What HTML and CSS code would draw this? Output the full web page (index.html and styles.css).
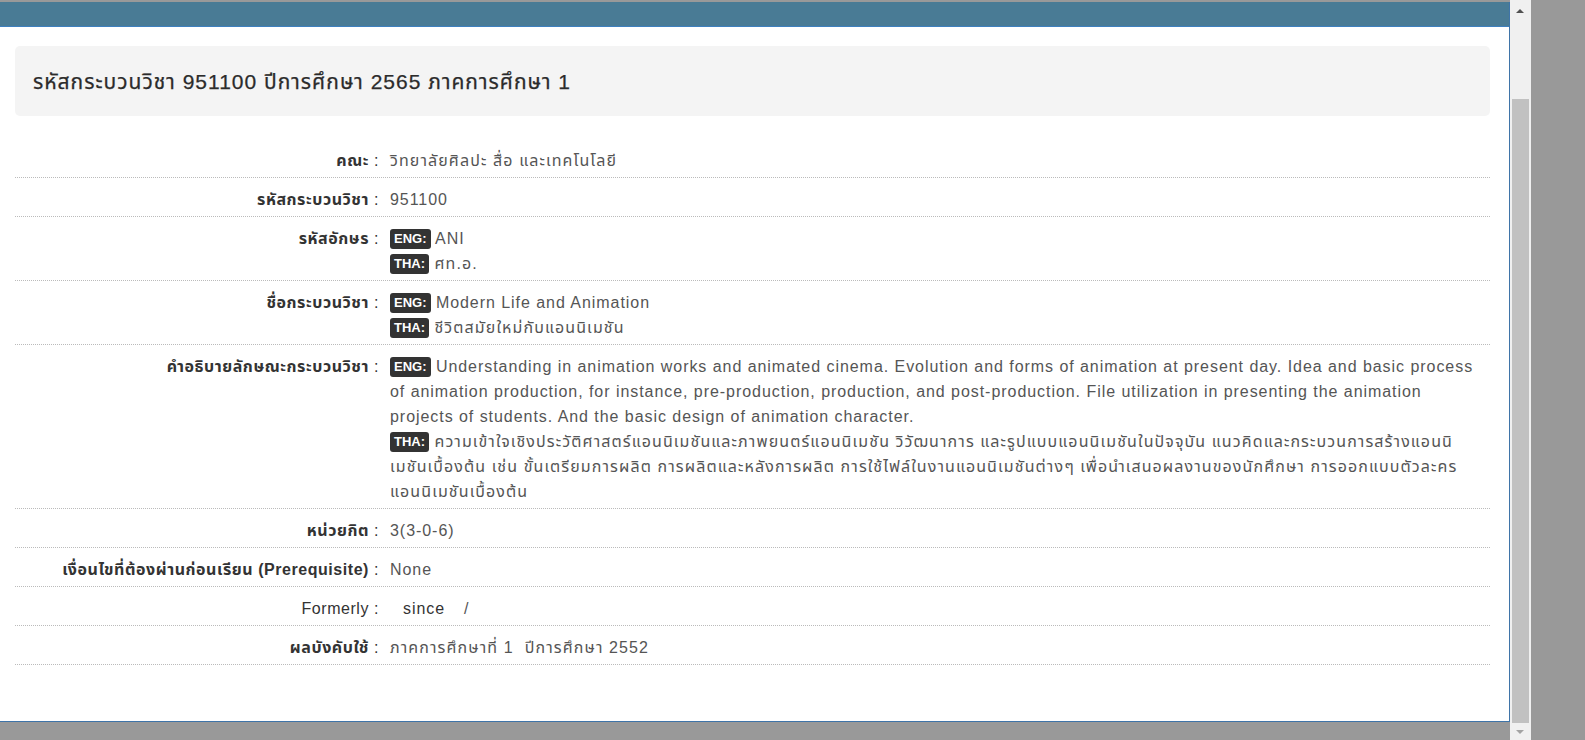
FILE: index.html
```html
<!DOCTYPE html>
<html lang="th">
<head>
<meta charset="utf-8">
<title>รหัสกระบวนวิชา 951100</title>
<link rel="stylesheet" href="styles.css">
</head>
<body>
<div class="stage">
  <div class="viewport">
    <div class="top-strip"></div>
    <div class="modal">
      <div class="modal-bar"></div>
      <div class="modal-body">
        <div class="title-box">
          <h1 class="title">รหัสกระบวนวิชา 951100 ปีการศึกษา 2565 ภาคการศึกษา 1</h1>
        </div>
        <div class="details">
          <div class="row">
            <div class="label"><b>คณะ</b> :</div>
            <div class="value"><span class="th">วิทยาลัยศิลปะ สื่อ และเทคโนโลยี</span></div>
          </div>
          <div class="row">
            <div class="label"><b>รหัสกระบวนวิชา</b> :</div>
            <div class="value">951100</div>
          </div>
          <div class="row">
            <div class="label"><b>รหัสอักษร</b> :</div>
            <div class="value">
              <div><span class="badge">ENG:</span> ANI</div>
              <div><span class="badge">THA:</span> <span class="th">ศท.อ.</span></div>
            </div>
          </div>
          <div class="row">
            <div class="label"><b>ชื่อกระบวนวิชา</b> :</div>
            <div class="value">
              <div><span class="badge">ENG:</span> Modern Life and Animation</div>
              <div><span class="badge">THA:</span> <span class="th">ชีวิตสมัยใหม่กับแอนนิเมชัน</span></div>
            </div>
          </div>
          <div class="row">
            <div class="label"><b>คำอธิบายลักษณะกระบวนวิชา</b> :</div>
            <div class="value">
              <div><span class="badge">ENG:</span> Understanding in animation works and animated cinema. Evolution and forms of animation at present day. Idea and basic process of animation production, for instance, pre-production, production, and post-production. File utilization in presenting the animation projects of students. And the basic design of animation character.</div>
              <div><span class="badge">THA:</span> <span class="th">ความเข้าใจเชิงประวัติศาสตร์แอนนิเมชันและภาพยนตร์แอนนิเมชัน วิวัฒนาการ และรูปแบบแอนนิเมชันในปัจจุบัน แนวคิดและกระบวนการสร้างแอนนิ<br>เมชันเบื้องต้น เช่น ขั้นเตรียมการผลิต การผลิตและหลังการผลิต การใช้ไฟล์ในงานแอนนิเมชันต่างๆ เพื่อนำเสนอผลงานของนักศึกษา การออกแบบตัวละคร<br>แอนนิเมชันเบื้องต้น</span></div>
            </div>
          </div>
          <div class="row">
            <div class="label"><b>หน่วยกิต</b> :</div>
            <div class="value">3(3-0-6)</div>
          </div>
          <div class="row">
            <div class="label"><b>เงื่อนไขที่ต้องผ่านก่อนเรียน (Prerequisite)</b> :</div>
            <div class="value">None</div>
          </div>
          <div class="row">
            <div class="label">Formerly :</div>
            <div class="value"><span class="since">since</span><span class="slash">/</span></div>
          </div>
          <div class="row">
            <div class="label"><b>ผลบังคับใช้</b> :</div>
            <div class="value"><span class="th">ภาคการศึกษาที่ 1 &nbsp;ปีการศึกษา 2552</span></div>
          </div>
        </div>
      </div>
    </div>
    <div class="backdrop-bottom"></div>
  </div>
  <div class="scrollbar">
    <div class="sb-arrow sb-up"></div>
    <div class="sb-track"><div class="sb-thumb"></div></div>
    <div class="sb-arrow sb-down"></div>
  </div>
  <div class="backdrop-side"></div>
</div>
</body>
</html>
```

FILE: styles.css
```css
html, body {
  margin: 0;
  padding: 0;
  height: 100%;
  overflow: hidden;
}
body {
  background: #999999;
  font-family: "Liberation Sans", "Noto Sans Thai", "Noto Sans", sans-serif;
  font-size: 16px;
  color: #333333;
}
.stage {
  display: flex;
  height: 740px;
}
.viewport {
  width: 1510px;
  display: flex;
  flex-direction: column;
}
.top-strip {
  height: 2px;
  background: #999999;
}
.modal {
  height: 719px;
  background: #ffffff;
  border-right: 1px solid #3f74a8;
  border-bottom: 1px solid #3f74a8;
  display: flex;
  flex-direction: column;
}
.modal-bar {
  height: 24px;
  background: #497b95;
  border-bottom: 1px solid #3e80bf;
}
.modal-body {
  padding: 19px 19px 0 15px;
}
.title-box {
  background: #f4f4f4;
  border-radius: 5px;
  height: 70px;
  display: flex;
  align-items: center;
  padding: 0 18px;
}
.title {
  margin: 0;
  padding-top: 2px;
  font-size: 21px;
  font-weight: 400;
  letter-spacing: 1px;
  color: #2b2b2b;
  -webkit-text-stroke: 0.25px #2b2b2b;
}
.details {
  margin-top: 23px;
}
.row {
  display: grid;
  grid-template-columns: 364px 1fr;
  column-gap: 11px;
  padding: 9px 0 4px 0;
  border-bottom: 1px dotted #bbbbbb;
  line-height: 25px;
}
.label {
  text-align: right;
  color: #333333;
  letter-spacing: 0.55px;
}
.label b {
  font-weight: 700;
}
.value {
  color: #555555;
  letter-spacing: 0.95px;
}
.value .th {
  letter-spacing: 1.1px;
}
.badge {
  display: inline-block;
  background: #333333;
  color: #ffffff;
  font-weight: 700;
  font-size: 13px;
  letter-spacing: 0;
  line-height: 20px;
  padding: 0 4px;
  border-radius: 3px;
  vertical-align: 1px;
}
.since {
  color: #333333;
  margin-left: 13px;
}
.slash {
  margin-left: 19px;
}
.backdrop-bottom {
  flex: 1;
}
.scrollbar {
  width: 21px;
  background: #f0f0f0;
  display: flex;
  flex-direction: column;
}
.sb-arrow {
  height: 17px;
  position: relative;
}
.sb-up::after, .sb-down::after {
  content: "";
  position: absolute;
  left: 6px;
  width: 0;
  height: 0;
  border-left: 4px solid transparent;
  border-right: 4px solid transparent;
}
.sb-up::after {
  top: 9px;
  border-bottom: 4px solid #505050;
}
.sb-down::after {
  top: 7px;
  border-top: 4px solid #a3a3a3;
}
.sb-track {
  flex: 1;
  padding: 82px 2px 0 2px;
  display: flex;
}
.sb-thumb {
  flex: 1;
  background: #c1c1c1;
}
.backdrop-side {
  flex: 1;
}
```
